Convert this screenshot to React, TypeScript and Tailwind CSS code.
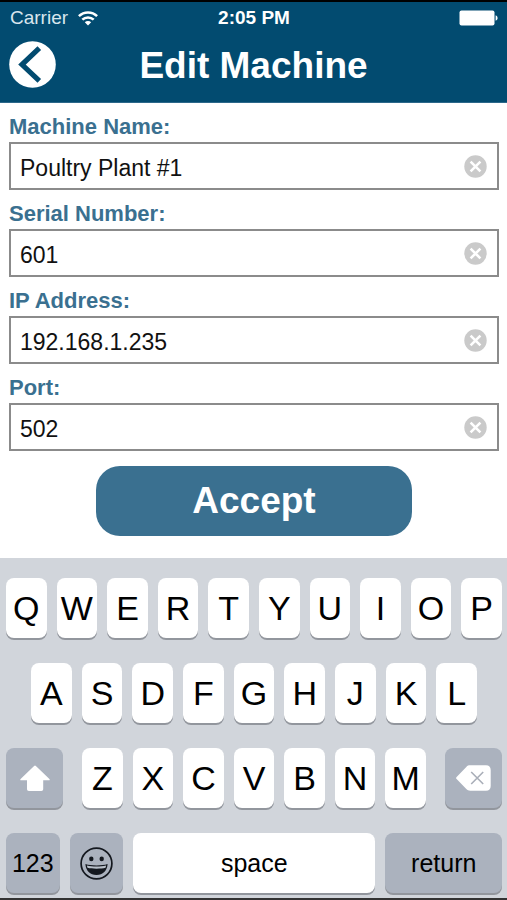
import { useState } from "react";
import type { ReactNode } from "react";
import { clsx } from "clsx";

interface FieldProps {
  id: string;
  label: string;
  value: string;
  onChange: (value: string) => void;
}

function StatusBar() {
  return (
    <div className="grid h-8 grid-cols-3 items-center pl-[10px] pr-[9px] text-[19px] leading-8 text-white">
      <div className="flex items-center gap-[10px] text-[#d9e6ee]">
        <span>Carrier</span>
        <svg className="h-[15px] w-5" viewBox="0 0 20 15" fill="none" stroke="#fff" strokeWidth="2.5">
          <path d="M0.9 5.1a13 13 0 0 1 18.2 0" />
          <path d="M4.3 8.7a8.2 8.2 0 0 1 11.4 0" />
          <path d="M6.8 11.2a4.6 4.6 0 0 1 6.4 0L10 14.4z" fill="#fff" stroke="none" />
        </svg>
      </div>
      <span className="text-center font-bold">2:05 PM</span>
      <svg className="h-4 w-[39px] justify-self-end" viewBox="0 0 39 16" fill="#fff">
        <rect x="0.5" y="0.5" width="35" height="15" rx="2" />
        <path d="M36.6 5.2c1.3.5 2 1.5 2 2.8s-.7 2.3-2 2.8z" />
      </svg>
    </div>
  );
}

function Field({ id, label, value, onChange }: FieldProps) {
  return (
    <div>
      <label htmlFor={id} className="block pt-[9px] text-[22px] font-bold leading-[30px] text-[#3a7090]">
        {label}
      </label>
      <div className="flex h-12 items-center border-2 border-[#8b8b8b] bg-white pl-[9px] pr-[10px]">
        <input
          id={id}
          type="text"
          value={value}
          onChange={(e) => onChange(e.target.value)}
          className="min-w-0 flex-1 bg-transparent pt-[3px] text-[23px] leading-7 text-[#111] outline-none"
        />
        <button type="button" aria-label={`Clear ${label}`} onClick={() => onChange("")}>
          <svg className="block size-[23px]" viewBox="0 0 23 23">
            <circle cx="11.5" cy="11.5" r="11.2" fill="#cacaca" />
            <path d="M6.6 6.6l9.8 9.8M16.4 6.6l-9.8 9.8" stroke="#fff" strokeWidth="2.6" />
          </svg>
        </button>
      </div>
    </div>
  );
}

interface KeyProps {
  children: ReactNode;
  className?: string;
  dark?: boolean;
  label?: string;
}

function Key({ children, className, dark, label }: KeyProps) {
  return (
    <button
      type="button"
      aria-label={label}
      className={clsx(
        "flex h-[60px] min-w-0 items-center justify-center rounded-lg text-black shadow-[0_2px_0_#92969d]",
        dark ? "bg-[#abb2be]" : "bg-white",
        className
      )}
    >
      {children}
    </button>
  );
}

function Letters({ letters }: { letters: string }) {
  return (
    <div className="flex flex-1 gap-[10px]">
      {letters.split("").map((letter) => (
        <Key key={letter} className="flex-1 basis-0 text-[34px] leading-10">
          {letter}
        </Key>
      ))}
    </div>
  );
}

function Keyboard() {
  return (
    <div className="flex flex-col gap-[25px] border-b-2 border-[#333] bg-[#d1d5db] pb-[5px] pl-[6px] pr-[5px] pt-5">
      <Letters letters="QWERTYUIOP" />
      <div className="flex px-[25px]">
        <Letters letters="ASDFGHJKL" />
      </div>
      <div className="flex gap-[19px]">
        <Key dark label="Shift" className="w-[11.5%]">
          <svg className="h-[26px] w-[30px]" viewBox="0 0 30 26" fill="#fff">
            <path d="M14.1.9a1.2 1.2 0 0 1 1.8 0L29.4 14c.7.7.4 1.3-.5 1.3h-5.7V24c0 1.2-.7 1.9-1.9 1.9H8.9C7.7 25.9 7 25.2 7 24v-8.7H1.1c-.9 0-1.2-.6-.5-1.3z" />
          </svg>
        </Key>
        <Letters letters="ZXCVBNM" />
        <Key dark label="Delete" className="w-[11.5%]">
          <svg className="h-[26px] w-[35px]" viewBox="0 0 35 26">
            <path
              d="M.6 11.9 10.3 1.9C11.5.7 12.5.3 14.2.3H30c3 0 4.7 1.7 4.7 4.7v16c0 3-1.7 4.7-4.7 4.7H14.2c-1.7 0-2.7-.4-3.9-1.6L.6 14.1c-.6-.7-.6-1.5 0-2.2z"
              fill="#fff"
            />
            <path d="M15.2 7l12 12M27.2 7l-12 12" stroke="#a9aeb8" strokeWidth="1.6" />
          </svg>
        </Key>
      </div>
      <div className="flex gap-[10px] text-[25px] leading-8">
        <Key dark className="w-[10.8%]">
          123
        </Key>
        <Key dark label="Emoji" className="w-[10.8%]">
          <svg className="size-[33px] shrink-0" viewBox="0 0 33 33">
            <circle cx="16.5" cy="16.5" r="15.4" fill="none" stroke="#14181f" strokeWidth="1.7" />
            <ellipse cx="11.3" cy="11.9" rx="2.2" ry="2.3" fill="#14181f" />
            <ellipse cx="21.7" cy="11.9" rx="2.2" ry="2.3" fill="#14181f" />
            <path d="M5.4 17.1c3 1 6.8 1.4 11.1 1.4s8.100-.4 11.100-1.400c-.5 6.900-4.700 10.900-11.100 10.900S5.900 24 5.400 17.100z" fill="#14181f" />
            <path d="M6.900 18.600c2.900.7 6 1 9.600 1s6.700-.3 9.600-1c-.1.900-.3 1.600-.6 2.200-2.400.6-5.300.9-9 .9s-6.600-.3-9-.9c-.3-.6-.5-1.300-.6-2.200z" fill="#b9c0ca" />
          </svg>
        </Key>
        <Key className="flex-1">space</Key>
        <Key dark className="w-[23.5%]">
          return
        </Key>
      </div>
    </div>
  );
}

export default function App() {
  const [machine, setMachine] = useState({
    name: "Poultry Plant #1",
    serial: "601",
    ip: "192.168.1.235",
    port: "502",
  });

  return (
    <div className="bg-white font-['Liberation_Sans',Arial,sans-serif]">
      {/* Header */}
      <header className="border-t-2 border-t-black bg-[#024b70]">
        <StatusBar />
        <div className="grid h-[69px] grid-cols-[47px_1fr_47px] items-start border-b border-[#2c688a] px-[9px] pt-[7px]">
          <button type="button" aria-label="Back">
            <svg className="block size-[47px]" viewBox="0 0 47 47">
              <circle cx="23.5" cy="23.5" r="23.3" fill="#fff" />
              <path d="M30.3 7.2 13 23.6 30.3 39.8" fill="none" stroke="#024b70" strokeWidth="5.2" />
            </svg>
          </button>
          <h1 className="text-center text-[37px] font-bold leading-[50px] text-white">Edit Machine</h1>
        </div>
      </header>

      {/* Form */}
      <form className="pl-[9px] pr-2" onSubmit={(e) => e.preventDefault()}>
        <Field id="name" label="Machine Name:" value={machine.name} onChange={(name) => setMachine({ ...machine, name })} />
        <Field id="serial" label="Serial Number:" value={machine.serial} onChange={(serial) => setMachine({ ...machine, serial })} />
        <Field id="ip" label="IP Address:" value={machine.ip} onChange={(ip) => setMachine({ ...machine, ip })} />
        <Field id="port" label="Port:" value={machine.port} onChange={(port) => setMachine({ ...machine, port })} />
        <div className="flex justify-center pb-[22px] pt-[15px]">
          <button type="submit" className="h-[70px] w-[316px] rounded-3xl bg-[#3a7090] text-[37px] font-bold leading-[50px] text-white">
            Accept
          </button>
        </div>
      </form>

      <Keyboard />
    </div>
  );
}
